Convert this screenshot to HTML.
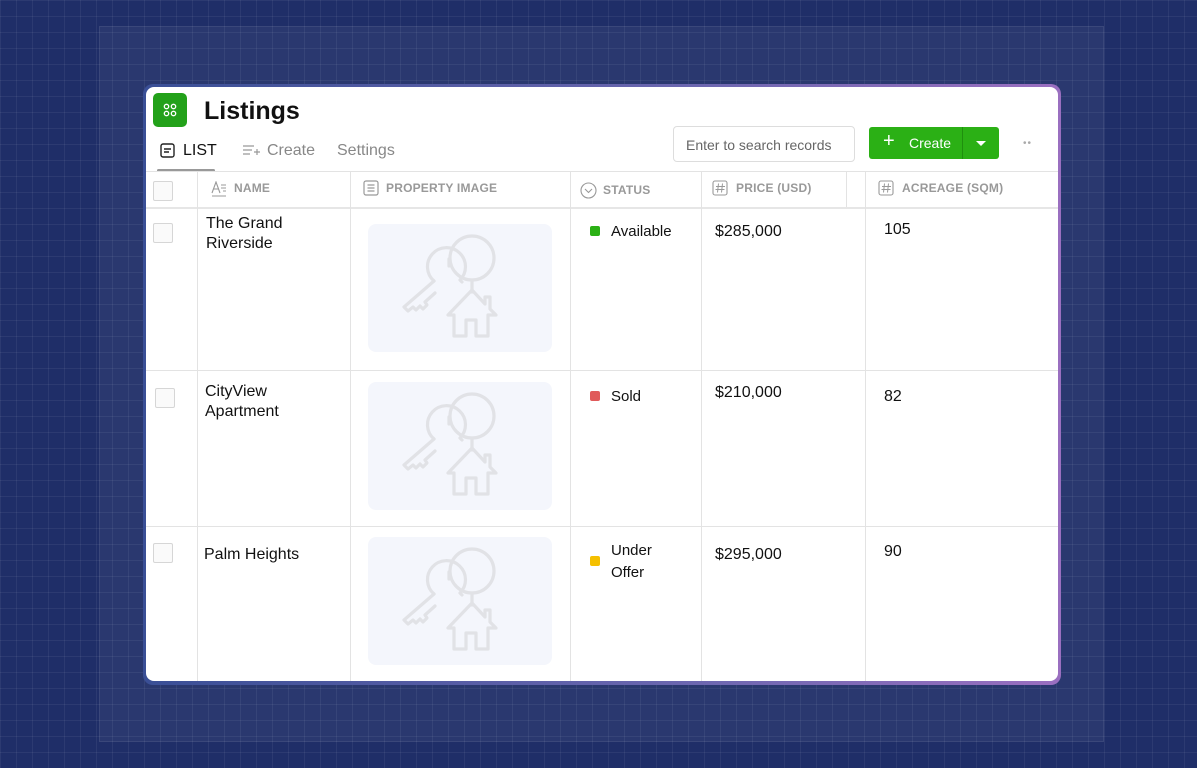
<!DOCTYPE html>
<html><head><style>
*{margin:0;padding:0;box-sizing:border-box}
body{width:1197px;height:768px;overflow:hidden;position:relative;font-family:"Liberation Sans",sans-serif;
background-color:#1f2e68;
background-image:linear-gradient(rgba(255,255,255,.06) 1px,transparent 1px),linear-gradient(90deg,rgba(255,255,255,.06) 1px,transparent 1px);
background-size:16px 16px}
.panel{position:absolute;left:99px;top:26px;width:1005px;height:716px;background:rgba(255,255,255,.05);border:1px solid rgba(255,255,255,.08)}
.frame{position:absolute;left:143px;top:84px;width:918px;height:601px;border-radius:10px;background:linear-gradient(90deg,#3a4f96 0%,#6c67b0 60%,#9a6fc0 100%)}
.card{position:absolute;left:146px;top:87px;width:912px;height:594px;background:#fff;border-radius:8px;overflow:hidden}
.abs{position:absolute}
.logo{left:7px;top:6px;width:34px;height:34px;background:#23a11a;border-radius:5px}
h1{position:absolute;left:58px;top:10px;font-size:25px;font-weight:700;color:#111}
.tab{position:absolute;top:55px;font-size:16px;color:#888}
.search{left:527px;top:39px;width:182px;height:36px;border:1px solid #ddd;border-radius:4px;font-size:14px;color:#666;padding:10px 12px}
.btn{left:723px;top:40px;width:130px;height:32px;background:#2bb015;border-radius:3px;color:#fff;font-size:14px}
.hl{position:absolute;left:0;width:912px;height:1px;background:#e3e3e3}
.vl{position:absolute;width:1px;background:#e3e3e3}
.th{position:absolute;top:94px;font-size:12px;font-weight:700;color:#999;letter-spacing:.2px}
.cb{position:absolute;width:20px;height:20px;border:1px solid #d6d6d6;border-radius:2px;background:#fafafa}
.td{position:absolute;font-size:16px;color:#111;line-height:20px}
.img{position:absolute;left:222px;width:184px;height:128px;background:#f4f6fc;border-radius:8px}
.dot{position:absolute;width:10px;height:10px;border-radius:2px}
</style></head><body>
<div class="panel"></div>
<div class="frame"></div>
<div class="card">
<div class="abs logo"><svg width="34" height="34"><g fill="none" stroke="#fff" stroke-width="1.3"><circle cx="13.5" cy="13.5" r="2.2"/><circle cx="20.5" cy="13.5" r="2.2"/><circle cx="13.5" cy="20.5" r="2.2"/><circle cx="20.5" cy="20.5" r="2.2"/></g></svg></div>
<h1>Listings</h1>
<svg class="abs" style="left:14px;top:56px" width="15" height="15"><rect x="1" y="1" width="13" height="13" rx="2" fill="none" stroke="#222" stroke-width="1.4"/><path d="M4 6h7M4 9h5" stroke="#222" stroke-width="1.4"/></svg>
<div class="tab" style="left:37px;color:#111">LIST</div>
<div class="abs" style="left:11px;top:82px;width:58px;height:3px;background:#999;border-radius:2px"></div>
<svg class="abs" style="left:97px;top:58px" width="18" height="12"><path d="M0 1h11M0 5h9M0 9h7M11 7h6M14 4v6" stroke="#999" stroke-width="1.2" fill="none"/></svg>
<div class="tab" style="left:121px">Create</div>
<div class="tab" style="left:191px">Settings</div>
<div class="abs search">Enter to search records</div>
<div class="abs btn"><span class="abs" style="left:14px;top:3px;font-size:20px;font-weight:300">+</span><span class="abs" style="left:40px;top:8px">Create</span><div class="abs" style="left:93px;top:0;width:1px;height:32px;background:#1f8f0e"></div><div class="abs" style="left:107px;top:14px;border:5px solid transparent;border-top:5px solid #fff;border-bottom:0"></div></div>
<div class="abs" style="left:877px;top:51px;font-size:10px;color:#aaa;letter-spacing:1px">••</div>

<div class="hl" style="top:84px"></div>
<div class="hl" style="top:120px;height:2px;background:#e6e6e6"></div>
<div class="hl" style="top:283px"></div>
<div class="hl" style="top:439px"></div>
<div class="vl" style="left:51px;top:84px;height:510px"></div>
<div class="vl" style="left:204px;top:84px;height:510px"></div>
<div class="vl" style="left:424px;top:84px;height:510px"></div>
<div class="vl" style="left:555px;top:84px;height:510px"></div>
<div class="vl" style="left:700px;top:84px;height:36px"></div>
<div class="vl" style="left:719px;top:84px;height:510px"></div>

<div class="cb" style="left:7px;top:94px"></div>
<svg class="abs" style="left:65px;top:94px" width="18" height="16"><path d="M1 12L5 1L9 12M2.5 8h5M10 4h5M10 7h5M12 10h3M1 15h14" stroke="#999" stroke-width="1.1" fill="none"/></svg>
<div class="th" style="left:88px">NAME</div>
<svg class="abs" style="left:217px;top:93px" width="16" height="16"><rect x="1" y="1" width="14" height="14" rx="2" fill="none" stroke="#999" stroke-width="1.2"/><path d="M4.5 5h7M4.5 8h7M4.5 11h7" stroke="#999" stroke-width="1.2"/></svg>
<div class="th" style="left:240px">PROPERTY IMAGE</div>
<svg class="abs" style="left:434px;top:95px" width="17" height="17"><circle cx="8.5" cy="8.5" r="7.5" fill="none" stroke="#999" stroke-width="1.1"/><path d="M5 7l3.5 3.5L12 7" fill="none" stroke="#999" stroke-width="1.1"/></svg>
<div class="th" style="left:457px;top:96px">STATUS</div>
<svg class="abs" style="left:566px;top:93px" width="16" height="16"><rect x="1" y="1" width="14" height="14" rx="2" fill="none" stroke="#999" stroke-width="1.1"/><path d="M6.5 3.5l-1 9M10.5 3.5l-1 9M4 6.5h9M3.5 9.5h9" stroke="#999" stroke-width="1"/></svg>
<div class="th" style="left:590px">PRICE (USD)</div>
<svg class="abs" style="left:732px;top:93px" width="16" height="16"><rect x="1" y="1" width="14" height="14" rx="2" fill="none" stroke="#999" stroke-width="1.1"/><path d="M6.5 3.5l-1 9M10.5 3.5l-1 9M4 6.5h9M3.5 9.5h9" stroke="#999" stroke-width="1"/></svg>
<div class="th" style="left:756px">ACREAGE (SQM)</div>

<div class="cb" style="left:7px;top:136px"></div>
<div class="cb" style="left:9px;top:301px"></div>
<div class="cb" style="left:7px;top:456px"></div>

<div class="td" style="left:60px;top:127px">The Grand<br>Riverside</div>
<div class="td" style="left:59px;top:295px">CityView<br>Apartment</div>
<div class="td" style="left:58px;top:458px">Palm Heights</div>

<svg width="0" height="0" style="position:absolute"><defs><g id="ic" fill="none" stroke="#e1e2e6" stroke-width="3.2" stroke-linejoin="round" stroke-linecap="round"><circle cx="104" cy="34" r="22"/><path d="M66 57A19 19 0 1 1 92 56L94 58"/><path d="M81 35v7"/><path d="M66 57L36 83l4 4 5-4 3 3 4-4 3 3 4-4-2-3 10-9"/><path d="M104 56v12"/><path d="M104 66L80 91h6v21h12v-16h10v16h12V91h8l-6-6v-12h-5v7z"/></g></defs></svg>
<div class="img" style="top:137px"><svg width="184" height="128"><use href="#ic"/></svg></div>
<div class="img" style="top:295px"><svg width="184" height="128"><use href="#ic"/></svg></div>
<div class="img" style="top:450px"><svg width="184" height="128"><use href="#ic"/></svg></div>

<div class="dot" style="left:444px;top:139px;background:#2bb015"></div>
<div class="td" style="left:465px;top:135px;font-size:15px">Available</div>
<div class="dot" style="left:444px;top:304px;background:#e05a5a"></div>
<div class="td" style="left:465px;top:300px;font-size:15px">Sold</div>
<div class="dot" style="left:444px;top:469px;background:#f5c000"></div>
<div class="td" style="left:465px;top:453px;font-size:15px;line-height:22px">Under<br>Offer</div>

<div class="td" style="left:569px;top:135px">$285,000</div>
<div class="td" style="left:569px;top:296px">$210,000</div>
<div class="td" style="left:569px;top:458px">$295,000</div>
<div class="td" style="left:738px;top:133px">105</div>
<div class="td" style="left:738px;top:300px">82</div>
<div class="td" style="left:738px;top:455px">90</div>
</div>
</body></html>
